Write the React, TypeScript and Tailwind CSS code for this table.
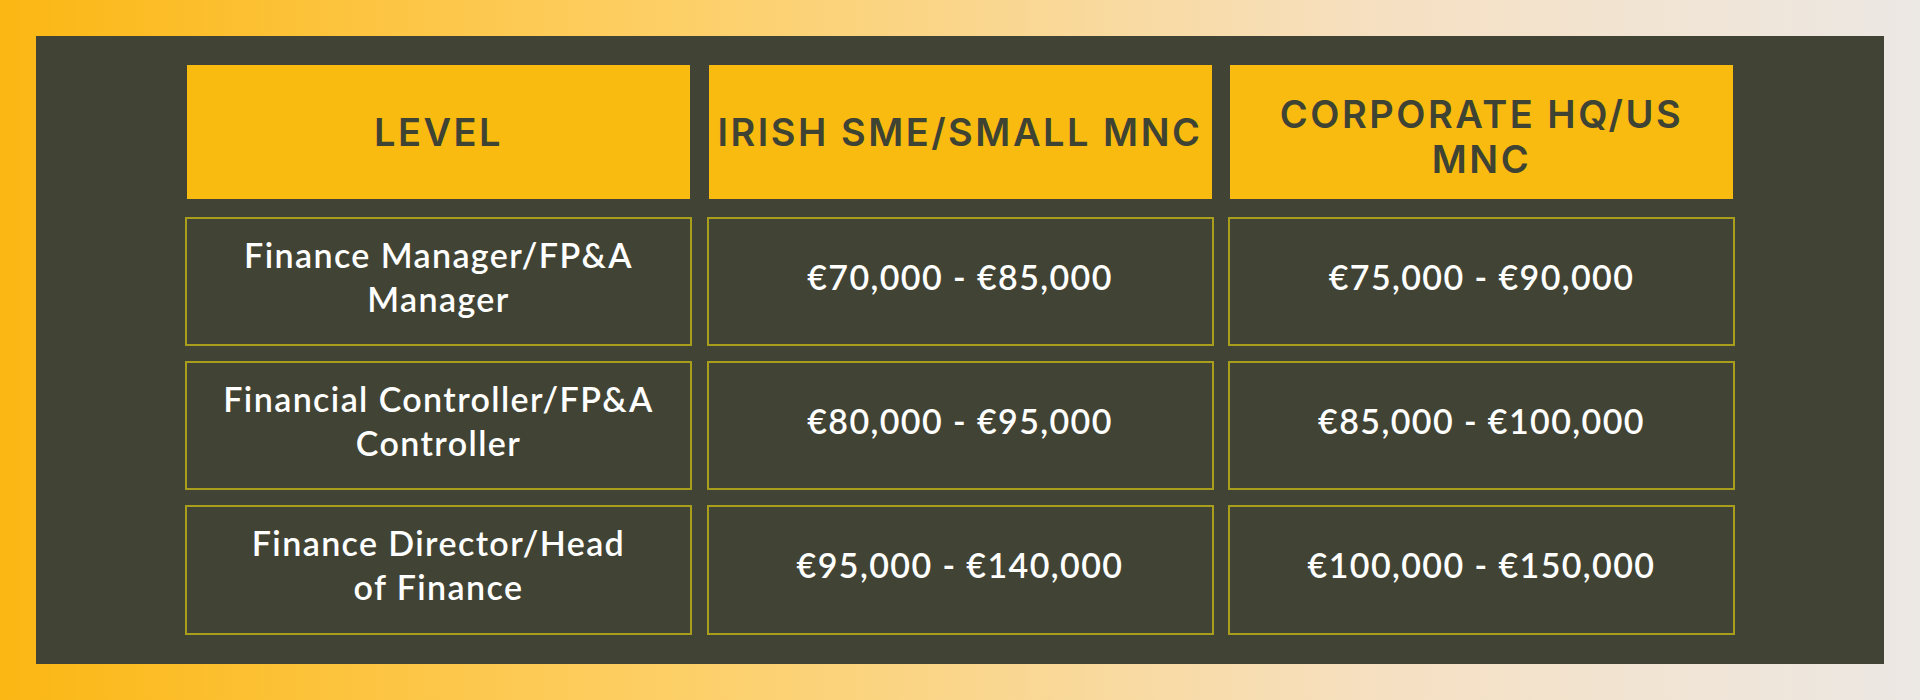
import React from "react";

const headers = [
  { t: "LEVEL", pad: "" },
  { t: "IRISH SME/SMALL MNC", pad: "" },
  { t: "CORPORATE HQ/US MNC", pad: "pt-[10px]" },
];

const rows: { level: string[]; sme: string; corp: string; h: string }[] = [
  { level: ["Finance Manager/FP&A", "Manager"], sme: "€70,000 - €85,000", corp: "€75,000 - €90,000", h: "h-[129px]" },
  { level: ["Financial Controller/FP&A", "Controller"], sme: "€80,000 - €95,000", corp: "€85,000 - €100,000", h: "h-[129px]" },
  { level: ["Finance Director/Head", "of Finance"], sme: "€95,000 - €140,000", corp: "€100,000 - €150,000", h: "h-[130px]" },
];

function BodyCell({ children, h }: { children: React.ReactNode; h: string }) {
  return (
    <div
      className={`${h} border-2 border-[#a99d1c] flex flex-col items-center justify-center pb-[10px] text-center text-white font-semibold text-[34px] leading-[44px] tracking-[1.4px]`}
      style={{ fontFamily: "Lato, 'Open Sans', sans-serif" }}
    >
      {children}
    </div>
  );
}

export default function App() {
  return (
    <div className="w-full h-[700px] p-[36px] bg-[linear-gradient(to_right,#fbb713_0%,#fdcf66_35%,#f6e0c2_72%,#ece8e4_100%)]">
      <div className="w-full h-full bg-[#414434] flex justify-center pt-[29px]">
        <div className="w-[1550px] flex flex-col">
          <div className="grid grid-cols-[507px_507px_507px] gap-x-[14.5px] mb-[18px]">
            {headers.map((h) => (
              <div
                key={h.t}
                className={`mx-[2px] h-[134px] bg-[#fabb10] flex items-center justify-center text-center text-[#3e4333] font-semibold text-[38px] leading-[45px] tracking-[2.5px] px-2 ${h.pad}`}
                style={{ fontFamily: "Inter, 'Libre Franklin', sans-serif" }}
              >
                {h.t}
              </div>
            ))}
          </div>
          <div className="flex flex-col gap-y-[15px]">
            {rows.map((r) => (
              <div key={r.sme} className="grid grid-cols-[507px_507px_507px] gap-x-[14.5px]">
                <BodyCell h={r.h}>
                  <span>{r.level[0]}</span>
                  <span>{r.level[1]}</span>
                </BodyCell>
                <BodyCell h={r.h}>{r.sme}</BodyCell>
                <BodyCell h={r.h}>{r.corp}</BodyCell>
              </div>
            ))}
          </div>
        </div>
      </div>
    </div>
  );
}
